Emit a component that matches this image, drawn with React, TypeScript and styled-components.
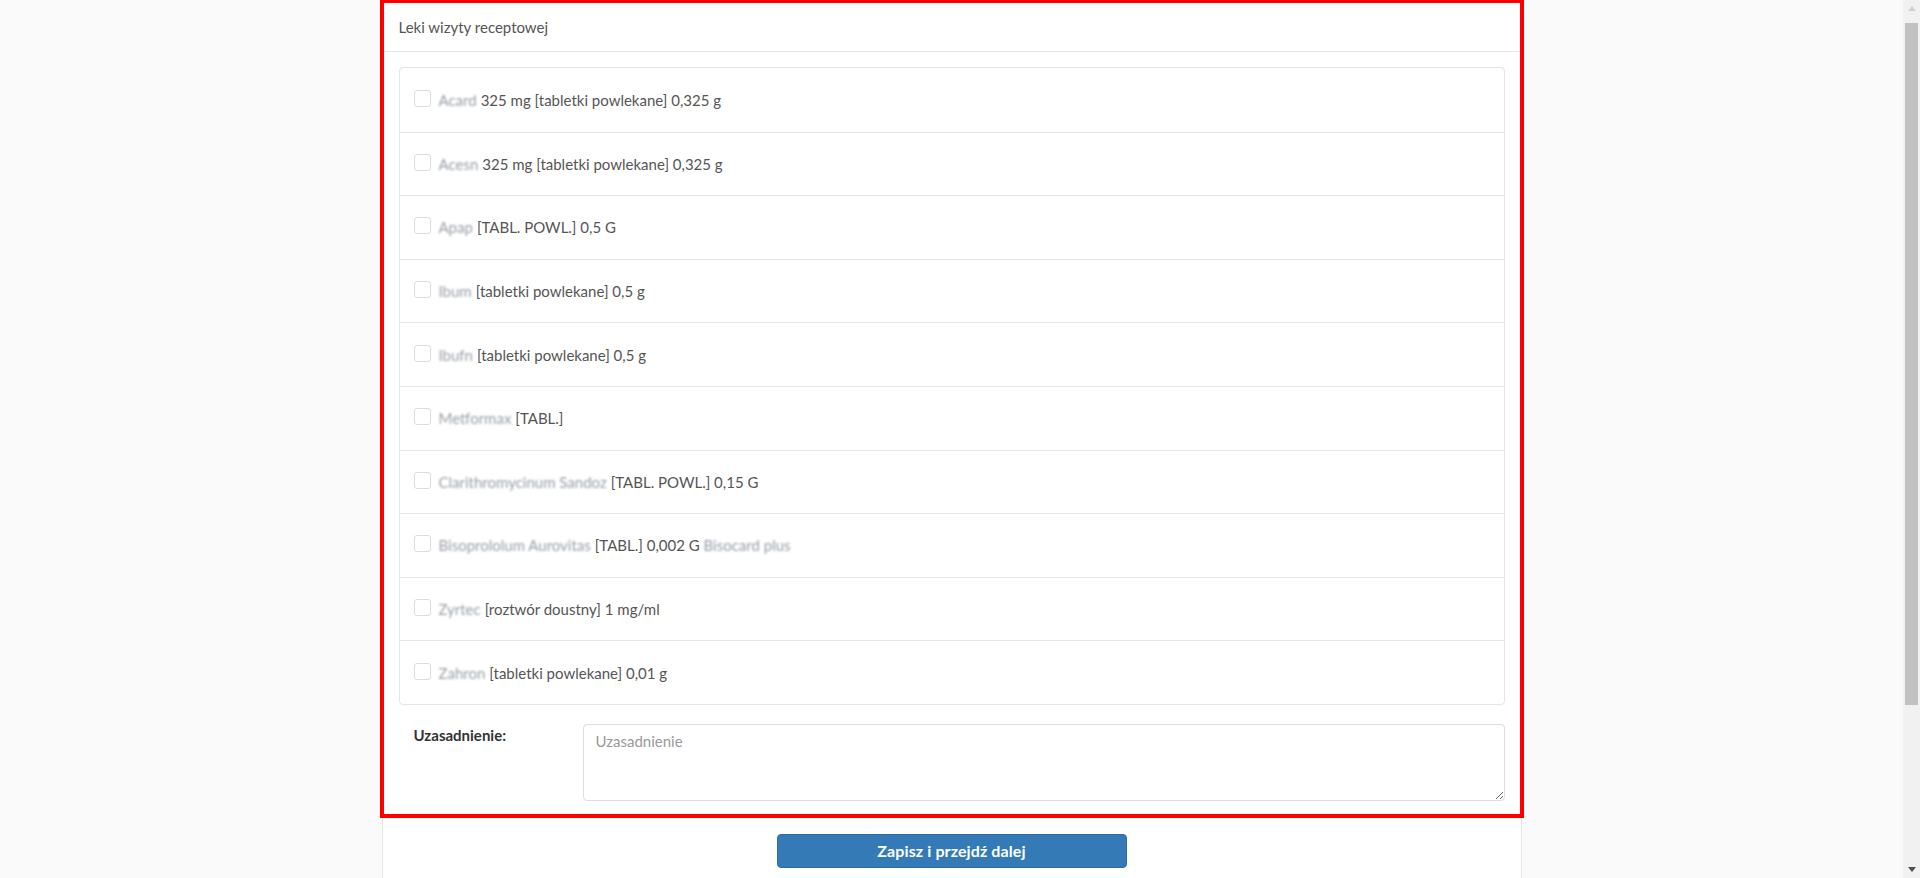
import React from 'react';
import styled, { createGlobalStyle } from 'styled-components';

const GlobalStyle = createGlobalStyle`
  html, body {
    margin: 0;
    padding: 0;
    height: 100%;
    overflow: hidden;
    background: #fafafa;
    font-family: Lato, "Open Sans", "Liberation Sans", sans-serif;
    font-size: 15px;
    color: #555;
  }
  * {
    box-sizing: border-box;
  }
`;

const Window = styled.div`
  display: flex;
  height: 100vh;
`;

const Main = styled.main`
  flex: 1;
  min-width: 0;
  overflow: hidden;
  background: #fafafa;
`;

/* browser scrollbar as seen in the screenshot */
const ScrollBar = styled.div`
  width: 17px;
  flex-shrink: 0;
  display: flex;
  flex-direction: column;
  background: #f1f1f1;
`;

const ScrollArrow = styled.div<{ $dim?: boolean }>`
  height: 17px;
  display: flex;
  align-items: center;
  justify-content: center;
  color: ${p => (p.$dim ? '#d0d0d0' : '#505050')};
`;

const ScrollTrack = styled.div`
  flex: 1;
  padding: 6px 2px 0;
`;

const ScrollThumb = styled.div`
  height: 682px;
  background: #c1c1c1;
`;

const Container = styled.div`
  width: 1140px;
  min-height: 1087px;
  margin: 0 auto;
  background: #fff;
  border-left: 1px solid #e7e7e7;
  border-right: 1px solid #e7e7e7;
`;

const Panel = styled.section`
  margin: 0 -3px;
  border: 4px solid #ff0000;
  border-top-width: 3px;
  background: #fff;
`;

const PanelHeader = styled.div`
  height: 49px;
  padding: 14px 15px 0;
  line-height: 20px;
  color: #555;
  border-bottom: 1px solid #e5e5e5;
`;

const PanelBody = styled.div`
  padding: 15px 15px 13px;
`;

const List = styled.div`
  border: 1px solid #e5e5e5;
  border-radius: 4px;
`;

const Row = styled.label`
  display: flex;
  align-items: center;
  height: 63.6px;
  padding: 0 14px;
  color: #555;
  line-height: 20px;
  cursor: pointer;

  & + & {
    border-top: 1px solid #e5e5e5;
  }
`;

const Check = styled.input.attrs({ type: 'checkbox' })`
  appearance: none;
  width: 17px;
  height: 17px;
  margin: 0 8px 3px 0;
  border: 1px solid #ddd;
  border-radius: 3px;
  background: #fff;
  flex-shrink: 0;
`;

const Hidden = styled.span`
  color: #7d8590;
  filter: blur(0.9px);
  opacity: 0.8;
  margin-right: 4px;
`;

const FormRow = styled.div`
  display: grid;
  grid-template-columns: 184px 1fr;
  margin-top: 19px;
`;

const FormLabel = styled.label`
  padding: 1px 15px 0;
  font-weight: 700;
  color: #333;
  line-height: 20px;
`;

const TextArea = styled.textarea`
  display: block;
  width: 100%;
  height: 77px;
  padding: 6px 12px;
  border: 1px solid #ddd;
  border-radius: 4px;
  font-family: inherit;
  font-size: 15px;
  line-height: 20px;
  color: #555;

  &::placeholder {
    color: #999;
  }
`;

const Footer = styled.div`
  display: flex;
  justify-content: center;
  padding-top: 16px;
`;

const SubmitButton = styled.button`
  width: 350px;
  height: 34px;
  background: #337ab7;
  border: 1px solid #2e6da4;
  border-radius: 4px;
  color: #fff;
  font-family: inherit;
  font-size: 16px;
  font-weight: 700;
  letter-spacing: 0.1px;
  cursor: pointer;
`;

type Drug = { name: string; rest: string; tail?: string };

const drugs: Drug[] = [
  { name: 'Acard', rest: '325 mg [tabletki powlekane] 0,325 g' },
  { name: 'Acesn', rest: '325 mg [tabletki powlekane] 0,325 g' },
  { name: 'Apap', rest: '[TABL. POWL.] 0,5 G' },
  { name: 'Ibum', rest: '[tabletki powlekane] 0,5 g' },
  { name: 'Ibufn', rest: '[tabletki powlekane] 0,5 g' },
  { name: 'Metformax', rest: '[TABL.]' },
  { name: 'Clarithromycinum Sandoz', rest: '[TABL. POWL.] 0,15 G' },
  { name: 'Bisoprololum Aurovitas', rest: '[TABL.] 0,002 G', tail: 'Bisocard plus' },
  { name: 'Zyrtec', rest: '[roztwór doustny] 1 mg/ml' },
  { name: 'Zahron', rest: '[tabletki powlekane] 0,01 g' },
];

const Triangle = ({ up }: { up?: boolean }) => (
  <svg width="8" height="5" viewBox="0 0 8 5">
    <path d={up ? 'M0 5 L4 0 L8 5 Z' : 'M0 0 L8 0 L4 5 Z'} fill="currentColor" />
  </svg>
);

export default function App() {
  return (
    <>
      <GlobalStyle />
      <Window>
        <Main>
          <Container>
            <Panel>
              <PanelHeader>Leki wizyty receptowej</PanelHeader>
              <PanelBody>
                <List>
                  {drugs.map((d, i) => (
                    <Row key={i}>
                      <Check />
                      <span>
                        <Hidden>{d.name}</Hidden>
                        {d.rest}
                        {d.tail && (
                          <>
                            {' '}
                            <Hidden>{d.tail}</Hidden>
                          </>
                        )}
                      </span>
                    </Row>
                  ))}
                </List>
                <FormRow>
                  <FormLabel htmlFor="uzasadnienie">Uzasadnienie:</FormLabel>
                  <TextArea id="uzasadnienie" placeholder="Uzasadnienie" />
                </FormRow>
              </PanelBody>
            </Panel>
            <Footer>
              <SubmitButton>Zapisz i przejdź dalej</SubmitButton>
            </Footer>
          </Container>
        </Main>
        <ScrollBar>
          <ScrollArrow $dim>
            <Triangle up />
          </ScrollArrow>
          <ScrollTrack>
            <ScrollThumb />
          </ScrollTrack>
          <ScrollArrow>
            <Triangle />
          </ScrollArrow>
        </ScrollBar>
      </Window>
    </>
  );
}
